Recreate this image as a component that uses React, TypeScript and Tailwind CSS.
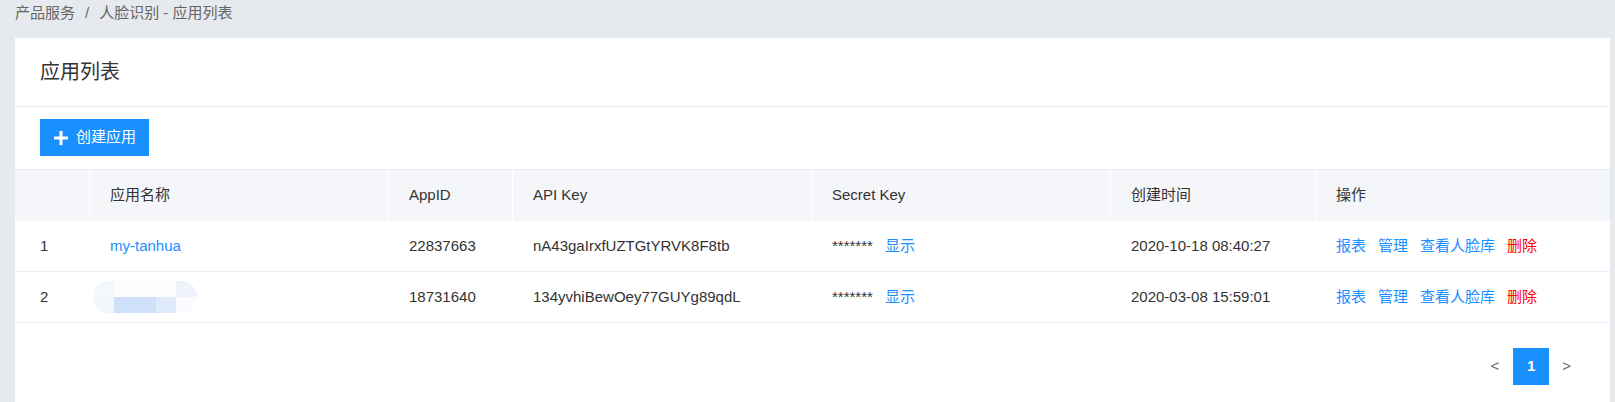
import React from "react";

const FONT = { fontFamily: '"Liberation Sans", "Noto Sans CJK SC", sans-serif' };

const rows = [
  {
    id: 1,
    name: "my-tanhua",
    appId: "22837663",
    apiKey: "nA43gaIrxfUZTGtYRVK8F8tb",
    created: "2020-10-18 08:40:27",
  },
  {
    id: 2,
    name: "",
    appId: "18731640",
    apiKey: "134yvhiBewOey77GUYg89qdL",
    created: "2020-03-08 15:59:01",
  },
];

const headers = ["", "应用名称", "AppID", "API Key", "Secret Key", "创建时间", "操作"];

function PlusIcon() {
  return (
    <svg width="14" height="14" viewBox="0 0 14 14" fill="white">
      <rect x="0" y="5.5" width="14" height="3" />
      <rect x="5.5" y="0" width="3" height="14" />
    </svg>
  );
}

// blurred name placeholder in row 2
function BlurredName() {
  return (
    <div className="w-[104px] h-[32px] rounded-full bg-[#f7f9fd] overflow-hidden flex flex-col blur-[0.6px]">
      <div className="h-[16px] flex">
        <div className="w-[21px] bg-[#f4f7fc]" />
        <div className="w-[62px] bg-[#fbfcfe]" />
        <div className="w-[21px] bg-[#eef3fb]" />
      </div>
      <div className="h-[16px] flex">
        <div className="w-[21px] bg-[#f2f6fc]" />
        <div className="w-[42px] bg-[#cfe1f8]" />
        <div className="w-[20px] bg-[#dfeafa]" />
        <div className="w-[21px] bg-[#fafbfe]" />
      </div>
    </div>
  );
}

export default function App() {
  return (
    <div className="h-screen overflow-hidden bg-[#e6e9ee] text-[#333]" style={FONT}>
      {/* Breadcrumb */}
      <div className="h-[25px] leading-[25px] pl-[15px] text-[15px] text-[#666]">
        产品服务<span className="mx-[10px]">/</span>人脸识别 - 应用列表
      </div>

      <div className="mt-[13px] ml-[15px] mr-[5px] bg-white">
        {/* Header */}
        <div className="h-[69px] flex items-center px-[25px] text-[20px] text-[#333] border-b border-[#e8e8e8]">
          应用列表
        </div>

        {/* Toolbar */}
        <div className="pt-[12px] pb-[13px] px-[25px]">
          <button className="h-[37px] w-[109px] bg-[#1890ff] flex items-center pl-[14px] text-white text-[15px]">
            <PlusIcon />
            <span className="ml-[8px]">创建应用</span>
          </button>
        </div>

        {/* Table */}
        <div className="border-t border-[#ebeef5] text-[15px]">
          <div className="grid grid-cols-[75px_299px_124px_299px_299px_205px_1fr] h-[51px] bg-[#f5f6fa]">
            {headers.map((h, i) => (
              <div
                key={i}
                className={`flex items-center ${i === 0 ? "pl-[25px]" : "pl-[20px]"} ${
                  i < headers.length - 1 ? "border-r border-white" : ""
                }`}
              >
                {h}
              </div>
            ))}
          </div>

          {rows.map((r) => (
            <div
              key={r.id}
              className="grid grid-cols-[75px_299px_124px_299px_299px_205px_1fr] h-[51px] border-b border-[#ebeef5]"
            >
              <div className="flex items-center pl-[25px]">{r.id}</div>
              <div className="flex items-center pl-[20px] pr-px">
                {r.name ? (
                  <span className="text-[#1890ff]">{r.name}</span>
                ) : (
                  <div className="-ml-[17px]">
                    <BlurredName />
                  </div>
                )}
              </div>
              <div className="flex items-center pl-[20px]">{r.appId}</div>
              <div className="flex items-center pl-[20px]">{r.apiKey}</div>
              <div className="flex items-center pl-[20px]">
                <span>*******</span>
                <span className="ml-[12px] text-[#1890ff]">显示</span>
              </div>
              <div className="flex items-center pl-[20px]">{r.created}</div>
              <div className="flex items-center pl-[20px] gap-[12px]">
                <span className="text-[#1890ff]">报表</span>
                <span className="text-[#1890ff]">管理</span>
                <span className="text-[#1890ff]">查看人脸库</span>
                <span className="text-[#ff0000]">删除</span>
              </div>
            </div>
          ))}

          {/* Pagination */}
          <div className="flex items-center justify-end pr-[39px] mt-[25px] pb-[30px]">
            <span className="text-[#666] mr-[14px]">&lt;</span>
            <div className="w-[36px] h-[37px] bg-[#1890ff] text-white font-bold flex items-center justify-center">
              1
            </div>
            <span className="text-[#666] ml-[13px]">&gt;</span>
          </div>
        </div>
      </div>
    </div>
  );
}
